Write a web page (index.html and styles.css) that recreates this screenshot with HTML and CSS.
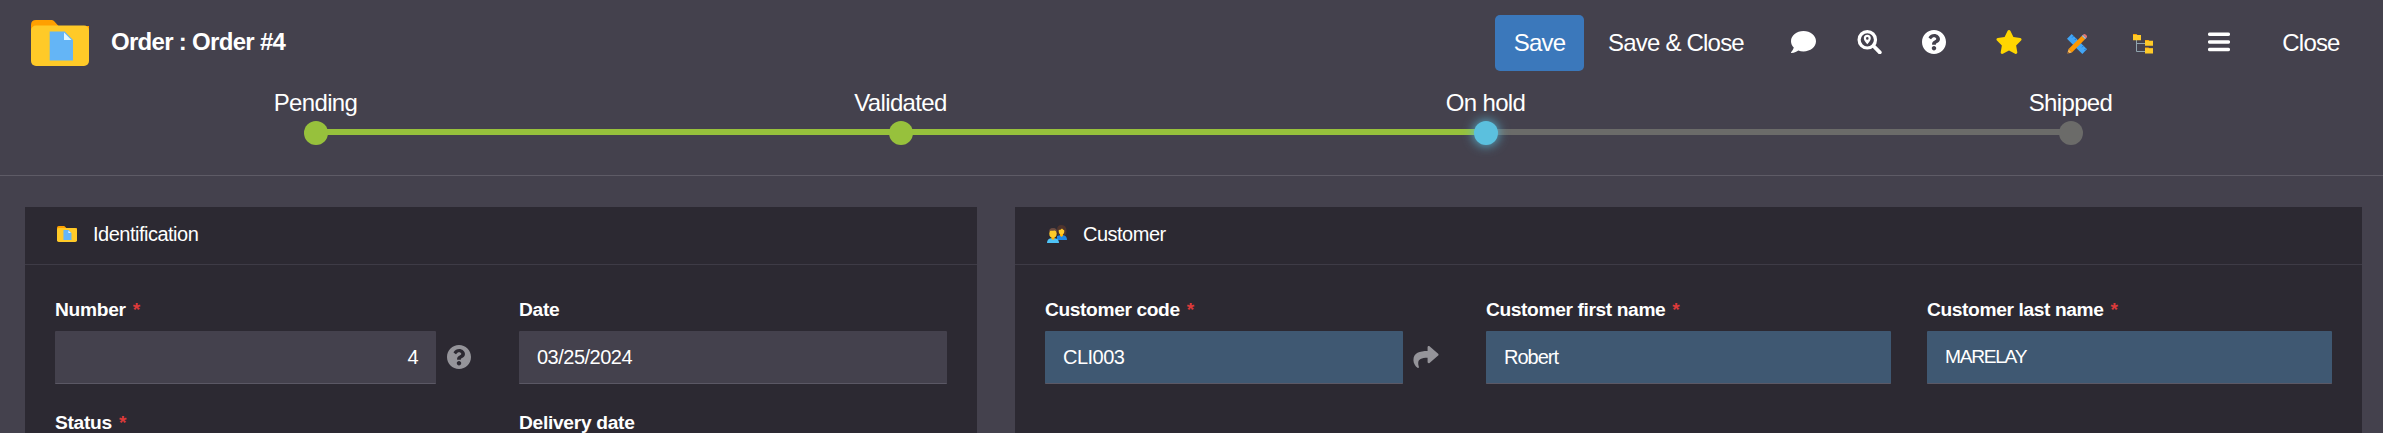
FILE: index.html
```html
<!DOCTYPE html>
<html lang="en">
<head>
<meta charset="utf-8">
<title>Order : Order #4</title>
<link rel="stylesheet" href="styles.css">
</head>
<body>
<svg class="sprite" aria-hidden="true">
  <symbol id="folder" viewBox="0 0 58 46">
    <path fill="#ffa000" d="M5 0h15.500q1.500 0 2.500 1l4.500 5H58v20H0V5q0-5 5-5z"/>
    <rect y="5.500" width="58" height="40.500" rx="5" fill="#ffca28"/>
    <path fill="#64b5f6" d="M18.700 11.500h15L42 20v20.500H18.700z"/>
    <path fill="#e1f5fe" d="M33 12.500V20h7.500z"/>
  </symbol>
  <symbol id="question" viewBox="8 8 496 496">
    <path fill="currentColor" d="M504 256c0 136.997-111.043 248-248 248S8 392.997 8 256C8 119.083 119.043 8 256 8s248 111.083 248 248zM262.655 90c-54.497 0-89.255 22.957-116.549 63.758-3.536 5.286-2.353 12.415 2.715 16.258l34.699 26.310c5.205 3.947 12.621 3.008 16.665-2.122 17.864-22.658 30.113-35.797 57.303-35.797 20.429 0 45.698 13.148 45.698 32.958 0 14.976-12.363 22.667-32.534 33.976C247.128 238.528 216 254.941 216 296v4c0 6.627 5.373 12 12 12h56c6.627 0 12-5.373 12-12v-1.333c0-28.462 83.186-29.647 83.186-106.667 0-58.002-60.165-102-116.531-102zM256 338c-25.365 0-46 20.635-46 46 0 25.364 20.635 46 46 46s46-20.636 46-46c0-25.365-20.635-46-46-46z"/>
  </symbol>
</svg>

<header class="header">
  <div class="toolbar">
    <svg class="order-icon"><use href="#folder"/></svg>
    <h1 class="title">Order : Order #4</h1>
    <button class="btn btn-primary">Save</button>
    <button class="btn btn-text">Save &amp; Close</button>
    <div class="actions">
      <svg class="icon-comment" viewBox="0 32 512 448"><path fill="#fff" d="M256 32C114.600 32 0 125.100 0 240c0 49.600 21.400 95 57 130.700C44.500 421.100 2.700 466 2.200 466.500c-2.200 2.300-2.800 5.700-1.500 8.700S4.800 480 8 480c66.300 0 116-31.800 140.600-51.400 32.700 12.300 69 19.400 107.400 19.400 141.400 0 256-93.100 256-208S397.400 32 256 32z"/></svg>
      <svg class="icon-search" viewBox="0 0 24 24"><circle cx="9.800" cy="9.800" r="8.200" fill="none" stroke="#fff" stroke-width="3.200"/><path d="M16 16l6.300 6.300" stroke="#fff" stroke-width="3.800" stroke-linecap="round"/><path fill="#fff" fill-rule="evenodd" d="M9.800 4.800a3.500 3.500 0 0 1 3.500 3.500c0 2.300-2.200 4.600-3.500 6-1.300-1.400-3.500-3.700-3.500-6a3.500 3.500 0 0 1 3.500-3.500zm0 2.300a1.300 1.300 0 1 0 0 2.600 1.300 1.300 0 0 0 0-2.600z"/></svg>
      <svg class="icon-help"><use href="#question"/></svg>
      <svg class="icon-star" viewBox="20 0 536 512"><path fill="#ffd600" d="M259.300 17.800L194 150.200 47.900 171.500c-26.200 3.800-36.700 36.100-17.700 54.600l105.700 103-25 145.500c-4.500 26.300 23.200 46 46.400 33.700L288 439.600l130.700 68.700c23.200 12.200 50.900-7.400 46.400-33.700l-25-145.500 105.700-103c19-18.500 8.500-50.800-17.700-54.600L382 150.200 316.700 17.800c-11.700-23.600-45.600-23.900-57.400 0z"/></svg>
      <svg class="icon-design" viewBox="0 0 20 20">
        <path fill="#42a5f5" d="M4.700 0L20 15.300 15.300 20 0 4.700z"/>
        <path stroke="#1976d2" stroke-width="1" d="M6.700 2L5.200 3.500m4 1L7.700 6m8.800 5.800L15 13.300m4 1.200l-1.500 1.500"/>
        <path fill="#ff9800" d="M14.700 2L18 5.300 4.900 18.400 1.600 15.100z"/>
        <path fill="#b0bec5" d="M14.700 2l1.300-1.300L19.300 4 18 5.300z"/>
        <path fill="#e57373" d="M16 .7q1.300-1.200 2.900 0 1.900 1.500.7 3l-.3.300z"/>
        <path fill="#ffb74d" d="M1.600 15.100l3.300 3.300L.2 19.800z"/><path fill="#5d4037" d="M.8 17.700l1.500 1.500-2.100.6z"/>
      </svg>
      <svg class="icon-tree" viewBox="0 0 20 20">
        <path fill="none" stroke="#90a4ae" d="M3.500 6v11.500H12M3.500 9.500H12"/>
        <path fill="#ffa000" d="M0 0h3.500l1 1H8v3H0zM12 6h3.500l1 1H20v3h-8zM12 13.500h3.500l1 1H20v3h-8z"/>
        <path fill="#ffca28" d="M0 1h8v5.200H0zM12 6.700h8v5h-8zM12 14.200h8v5.300h-8z"/>
      </svg>
      <svg class="icon-bars" viewBox="0 0 22 20"><path stroke="#fff" stroke-width="3.500" stroke-linecap="round" d="M1.700 2.200h18.600M1.700 9.900h18.600M1.700 17.500h18.600"/></svg>
    </div>
    <button class="btn btn-close">Close</button>
  </div>
  <ol class="steps">
    <li class="step done"><span class="step-label">Pending</span><span class="dot"></span></li>
    <li class="step done"><span class="step-label">Validated</span><span class="dot"></span></li>
    <li class="step current"><span class="step-label">On hold</span><span class="dot"></span></li>
    <li class="step"><span class="step-label">Shipped</span><span class="dot"></span></li>
  </ol>
</header>

<main class="panels">
  <section class="panel identification">
    <h2 class="panel-head"><svg class="head-folder"><use href="#folder"/></svg>Identification</h2>
    <div class="fields">
      <div class="field">
        <label class="label">Number <span class="req">*</span></label>
        <div class="control"><div class="input number">4</div><svg class="hint"><use href="#question"/></svg></div>
      </div>
      <div class="field">
        <label class="label">Date</label>
        <div class="control"><div class="input">03/25/2024</div></div>
      </div>
      <div class="field"><label class="label">Status <span class="req">*</span></label></div>
      <div class="field"><label class="label">Delivery date</label></div>
    </div>
  </section>
  <section class="panel customer">
    <h2 class="panel-head"><svg class="head-people" viewBox="0 0 20 18">
      <path fill="#4e342e" d="M10 5q0-5 4.500-5 5 0 5 6 0 3-1.500 4.500h-7q-1-2.500-1-5.500z"/>
      <path fill="#1e88e5" d="M10 15v-4l3-.8h3.500q3.500.5 3.500 4.800z"/>
      <path fill="#ffb300" d="M13 9h3v1.800L14.500 12 13 10.800z"/><ellipse cx="14.500" cy="6" rx="2.800" ry="3.600" fill="#ffca28"/><path fill="#4e342e" d="M11 5q.5-3.500 4-3.500 3 0 3 4-2-.3-3-2-1 1.500-4 1.500z"/>
      <path fill="#4fc3f7" d="M0 18q0-4 4-4.800h4q4 .8 4 4.800z"/>
      <path fill="#ffb300" d="M4.500 11.500h3v2.500L6 15l-1.500-1z"/><ellipse cx="6" cy="8.500" rx="3.700" ry="4.300" fill="#ffca28"/><path fill="#6d4c41" d="M2 8q-.5-5 4-5t4 5Q9.300 6 8 5.500 5 6 3 5.800 2.300 6.500 2 8z"/>
    </svg>Customer</h2>
    <div class="fields">
      <div class="field">
        <label class="label">Customer code <span class="req">*</span></label>
        <div class="control"><div class="input changed">CLI003</div><svg class="hint share" viewBox="0 32 512 448"><path fill="currentColor" d="M503.691 189.836L327.687 37.851C312.281 24.546 288 35.347 288 56.015v80.053C127.371 137.907 0 170.100 0 322.326c0 61.441 39.581 122.309 83.333 154.132 13.653 9.931 33.111-2.533 28.077-18.631C66.066 312.814 132.917 274.316 288 272.085V360c0 20.700 24.300 31.453 39.687 18.164l176.004-152c11.071-9.562 11.086-26.753 0-36.328z"/></svg></div>
      </div>
      <div class="field">
        <label class="label">Customer first name <span class="req">*</span></label>
        <div class="control"><div class="input changed first-name">Robert</div></div>
      </div>
      <div class="field">
        <label class="label">Customer last name <span class="req">*</span></label>
        <div class="control"><div class="input changed last-name">MARELAY</div></div>
      </div>
    </div>
  </section>
</main>
</body>
</html>
```
FILE: styles.css
```css
* { box-sizing: border-box; }
body {
  margin: 0;
  height: 433px;
  overflow: hidden;
  background: #44414d;
  color: #fff;
  font: 20px/24px "Liberation Sans", Arial, sans-serif;
  letter-spacing: -0.5px;
}
svg { display: block; flex: none; }
.sprite { position: absolute; width: 0; height: 0; }

.header { height: 176px; padding: 15px 24px 0; border-bottom: 1px solid #5e5b66; }
.toolbar { display: flex; align-items: center; height: 56px; }
.order-icon { width: 58px; height: 46px; margin-left: 7px; }
.title { margin: 0 auto 2px 22px; font-size: 24px; line-height: 28px; letter-spacing: -0.7px; white-space: nowrap; }
.btn {
  height: 56px;
  padding: 0;
  border: 0;
  background: none;
  color: inherit;
  font: 24px/28px "Liberation Sans", Arial, sans-serif;
  letter-spacing: -0.8px;
  white-space: nowrap;
}
.btn-primary { width: 89px; border-radius: 5px; background: #3b78bb; }
.btn-text { margin-left: 24px; width: 136px; }
.actions { display: flex; align-items: center; margin-left: 47px; }
.icon-comment { width: 25px; height: 22px; margin-top: -2px; }
.icon-search { width: 25px; height: 24px; margin-left: 41px; }
.icon-help { width: 24px; height: 24px; margin-left: 40px; margin-top: -2px; }
.icon-search, .icon-star { margin-top: -2px; }
.icon-star { width: 26px; height: 24px; margin-left: 50px; }
.icon-design { width: 20px; height: 20px; margin-left: 45px; margin-top: 2px; }
.icon-tree { width: 20px; height: 20px; margin-left: 46px; margin-top: 2px; }
.icon-bars { width: 22px; height: 20px; margin-left: 55px; margin-top: -2px; }
.btn-close { margin: 0 18px 0 51px; width: 60px; }

.steps { display: grid; grid-template-columns: repeat(4, 585px); margin: 17px 0 0 -1px; padding: 0; list-style: none; }
.step { position: relative; display: flex; flex-direction: column; align-items: center; gap: 5px; }
.step-label { padding-top: 1px; font-size: 24px; line-height: 27px; letter-spacing: -0.65px; }
.dot { position: relative; z-index: 1; width: 24px; height: 24px; border-radius: 50%; background: #6b6b69; }
.step:not(:last-child)::after { content: ""; position: absolute; top: 41px; left: 50%; width: 100%; height: 6px; background: #6b6b69; }
.step.done::after, .done .dot { background: #97c13c; }
.current .dot { background: #5bc0de; box-shadow: 0 0 12px #5bc0de; }

.panels { display: flex; gap: 38px; padding: 31px 21px 0 25px; }
.panel { height: 226px; overflow: hidden; background: #2c2932; }
.identification { width: 952px; }
.customer { width: 1347px; }
.panel-head { display: flex; align-items: center; height: 58px; margin: 0; padding: 0 32px 3px; border-bottom: 1px solid #3e3b46; font-size: inherit; font-weight: 400; }
.head-folder { width: 20px; height: 16px; margin-right: 16px; }
.head-people { width: 20px; height: 18px; margin-right: 16px; }
.fields { display: grid; grid-auto-rows: 90px; gap: 23px 36px; padding: 32px 30px 0; }
.identification .fields { grid-template: 90px 24px / 428px 428px; }
.customer .fields { grid-template-columns: 405px 405px 405px; }
.label { display: block; height: 34px; padding-top: 1px; font-size: 19.2px; font-weight: 700; line-height: 24px; letter-spacing: -0.38px; }
.identification .label { height: 24px; letter-spacing: -0.3px; }
.identification .control { margin-top: 10px; }
.req { margin-left: 2px; color: #dc3a3a; }
.control { display: flex; align-items: center; }
.input { flex: 1; height: 53px; padding: 0 18px; border-bottom: 1px solid #5b5865; border-radius: 1px; background: #44414d; line-height: 52px; }
.input.changed { background: #3f5872; }
.first-name { letter-spacing: -1px; }
.last-name { font-size: 19.2px; letter-spacing: -1.3px; }
.number { text-align: right; }
.hint { width: 24px; height: 24px; margin: 0 0 1px 11px; color: #95949a; }
.share { width: 26px; height: 22px; margin: 0 0 1px 10px; }
.identification .control:has(.hint) { margin-right: 12px; }
.customer .control:has(.hint) { margin-right: 11px; }
```
